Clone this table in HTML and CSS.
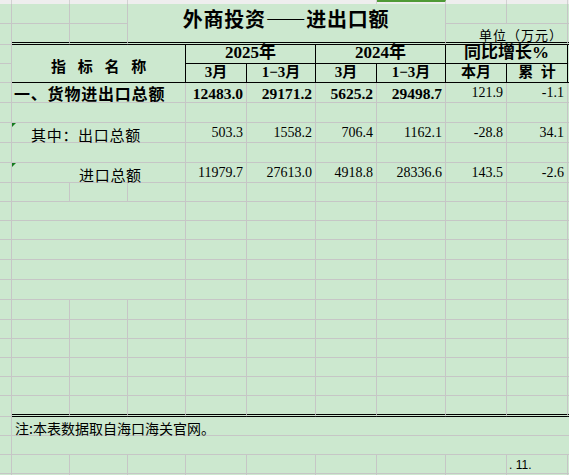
FILE: index.html
```html
<!DOCTYPE html>
<html lang="zh-CN">
<head>
<meta charset="utf-8">
<title>外商投资——进出口额</title>
<link rel="stylesheet" href="styles.css">
</head>
<body>
<div class="sheet">
  <!-- R0 strip -->
  <div class="c strip"></div><div class="c strip"></div><div class="c strip"></div><div class="c strip s4"></div><div class="c strip sel"></div><div class="c strip"></div><div class="c strip"></div><div class="c strip k"></div>
  <!-- R1 -->
  <div class="c"></div><div class="c"></div><div class="c"></div>
  <div class="c title s5 r2 dbl">外商投资——进出口额</div>
  <div class="c"></div><div class="c"></div><div class="c k"></div>
  <!-- R2 -->
  <div class="c"></div><div class="c dbl"></div><div class="c dbl"></div>
  <div class="c unit s2 dbl">单位（万元）</div><div class="c k dbl"></div>
  <!-- R3 -->
  <div class="c"></div>
  <div class="c h hname s3 r2">指标名称</div>
  <div class="c h hy s2">2025年</div>
  <div class="c h hy s2">2024年</div>
  <div class="c h hy s2">同比增长%</div>
  <div class="c k"></div>
  <!-- R4 -->
  <div class="c"></div>
  <div class="c h">3月</div><div class="c h">1−3月</div><div class="c h">3月</div><div class="c h">1−3月</div><div class="c h">本月</div><div class="c h hsp">累  计</div>
  <div class="c k hb"></div>
  <!-- R5 -->
  <div class="c"></div>
  <div class="c s3 lbl lbl-main">一、货物进出口总额</div>
  <div class="c n nb">12483.0</div><div class="c n nb">29171.2</div><div class="c n nb">5625.2</div><div class="c n nb">29498.7</div><div class="c n">121.9</div><div class="c n">-1.1</div>
  <div class="c k"></div>
  <!-- R6 -->
  <div class="c"></div><div class="c s3"></div><div class="c"></div><div class="c"></div><div class="c"></div><div class="c"></div><div class="c"></div><div class="c"></div><div class="c k"></div>
  <!-- R7 -->
  <div class="c"></div>
  <div class="c s3 lbl lbl-sub mark">其中：出口总额</div>
  <div class="c n">503.3</div><div class="c n">1558.2</div><div class="c n">706.4</div><div class="c n">1162.1</div><div class="c n">-28.8</div><div class="c n">34.1</div>
  <div class="c k"></div>
  <!-- R8 -->
  <div class="c"></div><div class="c s3"></div><div class="c"></div><div class="c"></div><div class="c"></div><div class="c"></div><div class="c"></div><div class="c"></div><div class="c k"></div>
  <!-- R9 -->
  <div class="c"></div>
  <div class="c s3 lbl lbl-imp mark">进口总额</div>
  <div class="c n">11979.7</div><div class="c n">27613.0</div><div class="c n">4918.8</div><div class="c n">28336.6</div><div class="c n">143.5</div><div class="c n">-2.6</div>
  <div class="c k"></div>
  <!-- R10 -->
  <div class="c"></div><div class="c"></div><div class="c"></div><div class="c"></div><div class="c"></div><div class="c"></div><div class="c"></div><div class="c"></div><div class="c"></div><div class="c"></div><div class="c k"></div>
  <!-- R11-R15 -->
  <div class="c"></div><div class="c s3"></div><div class="c"></div><div class="c"></div><div class="c"></div><div class="c"></div><div class="c"></div><div class="c"></div><div class="c k"></div>
  <div class="c"></div><div class="c s3"></div><div class="c"></div><div class="c"></div><div class="c"></div><div class="c"></div><div class="c"></div><div class="c"></div><div class="c k"></div>
  <div class="c"></div><div class="c s3"></div><div class="c"></div><div class="c"></div><div class="c"></div><div class="c"></div><div class="c"></div><div class="c"></div><div class="c k"></div>
  <div class="c"></div><div class="c s3"></div><div class="c"></div><div class="c"></div><div class="c"></div><div class="c"></div><div class="c"></div><div class="c"></div><div class="c k"></div>
  <div class="c"></div><div class="c s3"></div><div class="c"></div><div class="c"></div><div class="c"></div><div class="c"></div><div class="c"></div><div class="c"></div><div class="c k"></div>
  <!-- R16-R20 -->
  <div class="c"></div><div class="c"></div><div class="c"></div><div class="c"></div><div class="c"></div><div class="c"></div><div class="c"></div><div class="c"></div><div class="c"></div><div class="c"></div><div class="c k"></div>
  <div class="c"></div><div class="c"></div><div class="c"></div><div class="c"></div><div class="c"></div><div class="c"></div><div class="c"></div><div class="c"></div><div class="c"></div><div class="c"></div><div class="c k"></div>
  <div class="c"></div><div class="c"></div><div class="c"></div><div class="c"></div><div class="c"></div><div class="c"></div><div class="c"></div><div class="c"></div><div class="c"></div><div class="c"></div><div class="c k"></div>
  <div class="c"></div><div class="c"></div><div class="c"></div><div class="c"></div><div class="c"></div><div class="c"></div><div class="c"></div><div class="c"></div><div class="c"></div><div class="c"></div><div class="c k"></div>
  <div class="c"></div><div class="c"></div><div class="c"></div><div class="c"></div><div class="c"></div><div class="c"></div><div class="c"></div><div class="c"></div><div class="c"></div><div class="c"></div><div class="c k"></div>
  <!-- R21 -->
  <div class="c"></div><div class="c dbl"></div><div class="c dbl"></div><div class="c dbl"></div><div class="c dbl"></div><div class="c dbl"></div><div class="c dbl"></div><div class="c dbl"></div><div class="c dbl"></div><div class="c dbl"></div><div class="c k dbl"></div>
  <!-- R22 -->
  <div class="c"></div><div class="c s10 k note">注:本表数据取自海口海关官网。</div>
  <!-- R23 -->
  <div class="c"></div><div class="c s10 k"></div>
  <!-- R24 -->
  <div class="c"></div><div class="c"></div><div class="c"></div><div class="c"></div><div class="c"></div><div class="c"></div><div class="c"></div><div class="c"></div><div class="c"></div><div class="c page">. 11.</div><div class="c k"></div>
  <!-- R25 -->
  <div class="c"></div><div class="c"></div><div class="c"></div><div class="c"></div><div class="c"></div><div class="c"></div><div class="c"></div><div class="c"></div><div class="c"></div><div class="c"></div><div class="c k"></div>
</div>
</body>
</html>
```

FILE: styles.css
```css
html, body {
  margin: 0;
  padding: 0;
  overflow: hidden;
  background: #cce8cf;
}

.sheet {
  --grid: #c6c6c6;
  display: grid;
  width: 569px;
  grid-template-columns: 12px 58px 58px 58px 61px 69px 61px 69px 61px 61px 1px;
  grid-template-rows:
    4px 20px 21px 19px 19px
    20px 20px 20px 20px 20px
    19px 19px 19px
    20px 20px 20px 20px
    19px 19px 19px 19px
    21px 19px 19px 19px 20px;
  background: #cce8cf;
  color: #000;
  font-family: "Noto Sans CJK SC", sans-serif;
}

.c {
  box-sizing: border-box;
  position: relative;
  display: flex;
  align-items: flex-end;
  min-width: 0;
  padding: 0 3px 1px 2px;
  border-right: 1px solid var(--grid);
  border-bottom: 1px solid var(--grid);
  line-height: 1;
  white-space: nowrap;
}

.k { border-right: none; padding: 0; }

.s2 { grid-column: span 2; }
.s3 { grid-column: span 3; }
.s4 { grid-column: span 4; }
.s5 { grid-column: span 5; }
.s10 { grid-column: span 10; }
.r2 { grid-row: span 2; }

/* top strip of the previous row */
.strip {
  background: #eeeeee;
  border-bottom: none;
  border-right-color: #d2d2d2;
  padding: 0;
}
.sel { border-top: 2px solid #4f9a36; }

.dbl { border-bottom: 3px double #000; }

/* title */
.title {
  justify-content: center;
  align-items: flex-start;
  padding-top: 5px;
  font-size: 20px;
  font-weight: bold;
  letter-spacing: 0.7px;
}

.unit {
  justify-content: flex-end;
  padding-right: 4px;
  padding-bottom: 1px;
  font-size: 13px;
  letter-spacing: 1px;
}

/* header */
.h {
  justify-content: center;
  align-items: flex-end;
  padding: 0 0 2px 0;
  border-right-color: #000;
  border-bottom-color: #000;
  font-family: "Liberation Serif", "Noto Sans CJK SC", serif;
  font-size: 15px;
  font-weight: bold;
}
.hy { font-size: 17px; padding-bottom: 2px; }
.hname {
  align-items: center;
  padding: 4px 0 0 12px;
  letter-spacing: 11.7px;
  font-family: "Noto Sans CJK SC", sans-serif;
}
.hsp { white-space: pre; }
.hb { border-bottom-color: #000; }

/* labels */
.lbl { font-size: 15px; }
.lbl-main {
  font-size: 16px;
  font-weight: bold;
  letter-spacing: 0.8px;
  padding-left: 2px;
  padding-bottom: 1px;
}
.lbl-sub { padding-left: 19px; letter-spacing: 0.7px; padding-bottom: 0; }
.lbl-imp { padding-left: 67px; letter-spacing: 0.7px; padding-bottom: 0; }

.mark::before {
  content: "";
  position: absolute;
  left: 0;
  top: 0;
  border-top: 4px solid #157a1e;
  border-right: 4px solid transparent;
}

/* numbers */
.n {
  justify-content: flex-end;
  padding-right: 3px;
  padding-bottom: 2px;
  font-family: "Liberation Serif", serif;
  font-size: 14px;
}
.nb {
  font-size: 15.5px;
  font-weight: bold;
  padding-bottom: 1px;
}

.note {
  padding-left: 3px;
  padding-bottom: 0;
  font-size: 14px;
  letter-spacing: 0;
}

.page {
  padding-left: 2px;
  padding-bottom: 2px;
  font-family: "Liberation Sans", sans-serif;
  font-size: 12px;
}
```
